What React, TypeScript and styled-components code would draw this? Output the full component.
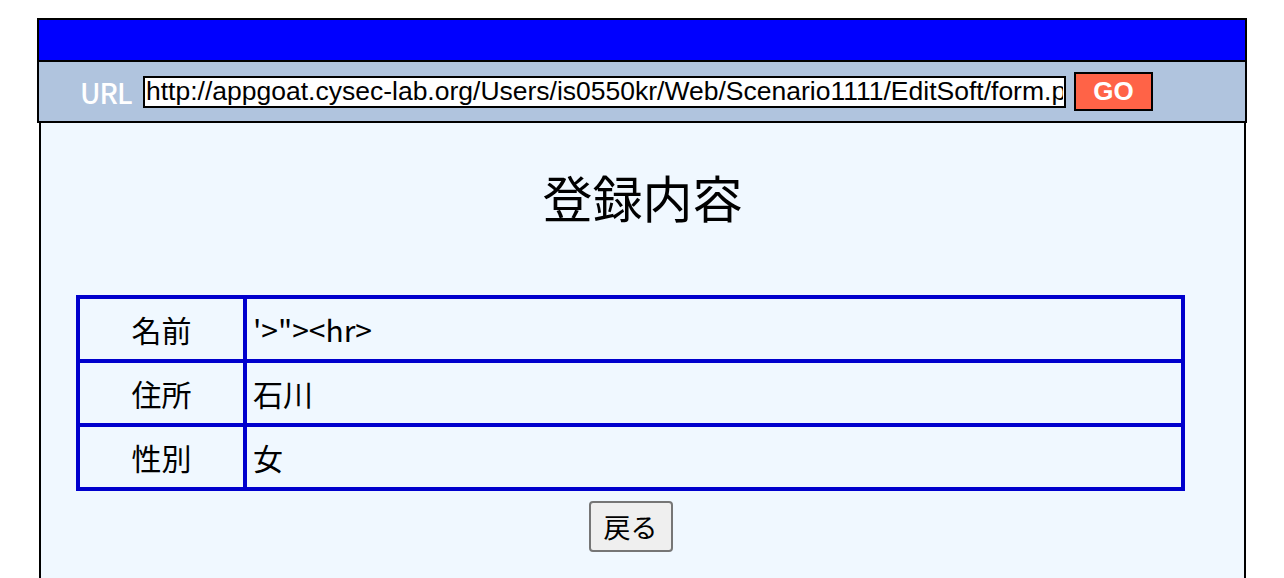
import React from "react";
import styled, { createGlobalStyle } from "styled-components";

// 登録内容の確認画面

const GlobalStyle = createGlobalStyle`
  html, body {
    margin: 0;
    padding: 0;
    background-color: #ffffff;
  }
  body {
    font-family: "Noto Sans CJK JP", "Noto Sans", sans-serif;
  }
`;

const Frame = styled.div`
  width: 1210px;
  margin: 18px 0 0 37px;
`;

const TopBar = styled.header`
  height: 40px;
  background-color: #0000ff;
  border: 2px solid #000000;
`;

const UrlBar = styled.div`
  height: 59px;
  background-color: #b0c4de;
  border: 2px solid #000000;
  border-top: none;
  display: flex;
  align-items: center;
  padding-left: 41px;
`;

const UrlLabel = styled.span`
  width: 63px;
  color: #ffffff;
  font-family: "Noto Sans CJK JP", "Noto Sans", sans-serif;
  font-size: 28px;
  font-weight: 500;
  letter-spacing: -1px;
`;

const UrlInput = styled.input`
  box-sizing: border-box;
  width: 923px;
  height: 32px;
  border: 2px solid #000000;
  background: #ffffff;
  padding: 0 1px;
  font-family: "Liberation Sans", Arial, sans-serif;
  font-size: 26.5px;
  color: #000000;
  outline: none;
`;

const GoButton = styled.button`
  box-sizing: border-box;
  width: 79px;
  height: 39px;
  margin-left: 8px;
  background-color: #ff6347;
  border: 2px solid #000000;
  color: #ffffff;
  font-family: "Liberation Sans", Arial, sans-serif;
  font-weight: 700;
  font-size: 26px;
  padding: 0;
`;

const Content = styled.main`
  background-color: #f0f8ff;
  border-left: 2px solid #000000;
  border-right: 2px solid #000000;
  margin: 0 1px 0 2px;
  min-height: 460px;
  padding-top: 43px;
`;

const Title = styled.h1`
  margin: 0;
  text-align: center;
  font-size: 50px;
  font-weight: 400;
  line-height: 60px;
  color: #000000;
`;

const Board = styled.section`
  width: 1109px;
  margin: 69px 0 0 35px;
  display: flex;
  flex-direction: column;
  align-items: center;
`;

const InfoTable = styled.table`
  width: 100%;
  border-collapse: collapse;
  border: 4px solid #0000cd;
`;

const Cell = styled.td<{ $label?: boolean }>`
  border: 4px solid #0000cd;
  height: 60px;
  padding: 0 6px;
  font-size: 30px;
  color: #000000;
  width: ${(p) => (p.$label ? "151px" : "auto")};
  text-align: ${(p) => (p.$label ? "center" : "left")};
  vertical-align: middle;
`;

const BackButton = styled.button`
  box-sizing: border-box;
  width: 84px;
  height: 51px;
  margin-top: 10px;
  background-color: #efefef;
  border: 2px solid #767676;
  border-radius: 4px;
  font-family: "Noto Sans CJK JP", "Noto Sans", sans-serif;
  font-size: 27px;
  color: #000000;
  padding: 0;
`;

const rows = [
  { label: "名前", value: `'>"><hr>` },
  { label: "住所", value: "石川" },
  { label: "性別", value: "女" },
];

function App() {
  return (
    <>
      <GlobalStyle />
      <Frame>
        <TopBar />
        <UrlBar>
          <UrlLabel>URL</UrlLabel>
          <UrlInput
            readOnly
            value="http://appgoat.cysec-lab.org/Users/is0550kr/Web/Scenario1111/EditSoft/form.php"
          />
          <GoButton>GO</GoButton>
        </UrlBar>
        <Content>
          <Title>登録内容</Title>
          <Board>
            <InfoTable>
              <tbody>
                {rows.map((row) => (
                  <tr key={row.label}>
                    <Cell $label>{row.label}</Cell>
                    <Cell>{row.value}</Cell>
                  </tr>
                ))}
              </tbody>
            </InfoTable>
            <BackButton>戻る</BackButton>
          </Board>
        </Content>
      </Frame>
    </>
  );
}

export default App;
